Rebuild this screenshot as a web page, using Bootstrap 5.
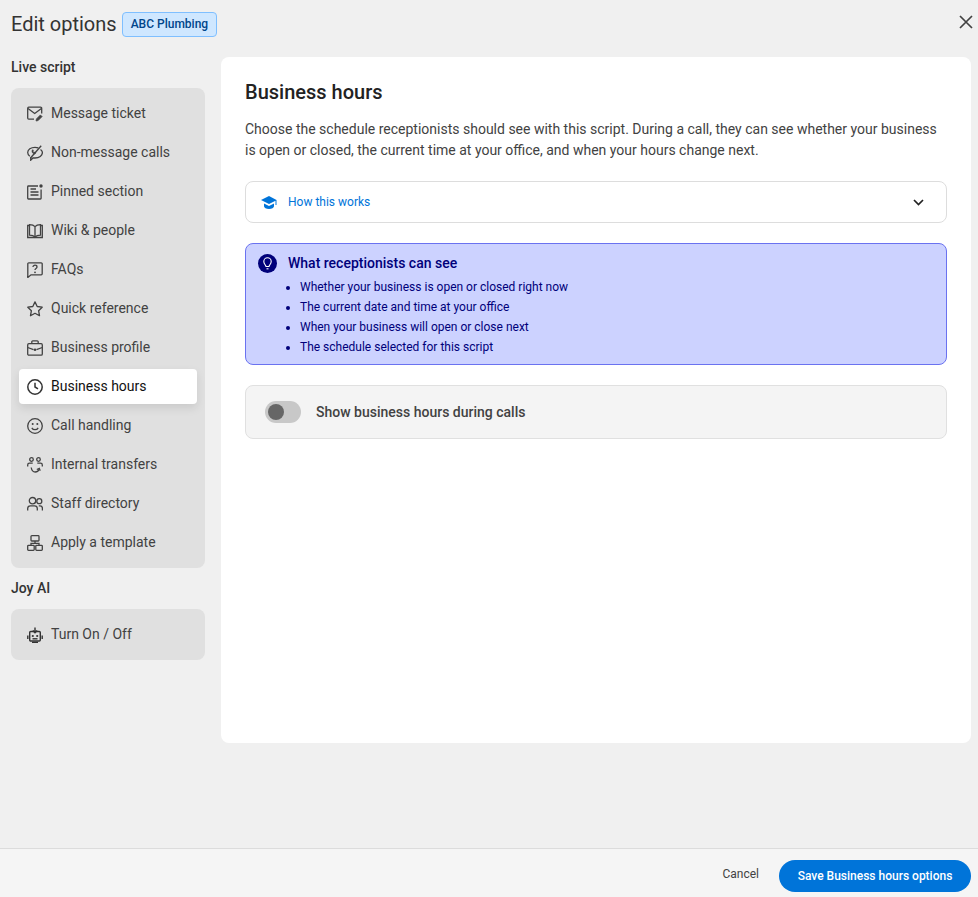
<!DOCTYPE html>
<html lang="en">
  <head>
    <meta charset="UTF-8" />
    <meta name="viewport" content="width=device-width, initial-scale=1.0" />
    <title>Edit options</title>
    <link
      href="https://cdn.jsdelivr.net/npm/bootstrap@5.3.0/dist/css/bootstrap.min.css"
      rel="stylesheet"
    />
    <style>
      html, body {
        height: 100%;
      }
      body {
        font-family: Roboto, "Liberation Sans", sans-serif;
        background-color: #f0f0f0;
        color: #333333;
        font-size: 14px;
      }
      .page-wrap {
        height: 897px;
      }
      .top-bar {
        height: 57px;
        padding: 12px 4px 0 11px;
      }
      .page-title {
        font-size: 20px;
        line-height: 25px;
        font-weight: 400;
        color: #333;
        margin: 0 5px 0 0;
      }
      .client-tag {
        height: 25px;
        line-height: 23px;
        padding: 0 8px;
        font-size: 12px;
        font-weight: 500;
        color: #00458a;
        background-color: #cfe7ff;
        border: 1px solid #7fbfff;
        border-radius: 4px;
      }
      .close-x {
        width: 16px;
        height: 16px;
        margin-top: 2px;
        padding: 0;
        border: 0;
        background: none;
        line-height: 0;
      }
      .main-area {
        padding: 0 7px 0 11px;
        gap: 16px;
      }
      .side-col {
        width: 194px;
      }
      .side-head {
        font-size: 14px;
        font-weight: 500;
        line-height: 20px;
        margin: 0;
      }
      .side-head-live {
        margin-bottom: 11px;
      }
      .side-head-joy {
        margin: 10px 0 11px;
      }
      .side-panel {
        background-color: #e0e0e0;
        border-radius: 8px;
        padding: 8px;
        gap: 4px;
      }
      .side-item {
        height: 35px;
        padding: 0 8px;
        gap: 8px;
        border-radius: 4px;
        color: #424242;
        font-size: 14px;
        text-decoration: none;
      }
      .side-item svg {
        flex: 0 0 16px;
      }
      .side-item.on {
        background-color: #fff;
        color: #111;
        box-shadow: 0 4px 10px rgba(0, 0, 0, 0.1);
      }
      .content-card {
        width: 750px;
        height: 686px;
        background-color: #fff;
        border-radius: 8px;
        padding: 24px;
      }
      .content-title {
        font-size: 20px;
        line-height: 23px;
        font-weight: 500;
        color: #222;
        margin-bottom: 15px;
      }
      .content-text {
        font-size: 14px;
        line-height: 21px;
        color: #424242;
        margin-bottom: 20px;
      }
      .how-box {
        height: 42px;
        border: 1px solid #dddddd;
        border-radius: 8px;
        padding: 0 22px 0 15px;
        margin-bottom: 20px;
        color: #0074d9;
        font-size: 12px;
        gap: 11px;
      }
      .see-box {
        height: 122px;
        background-color: #ccd2ff;
        border: 1px solid #6a72f0;
        border-radius: 8px;
        padding: 10px 12px;
        margin-bottom: 20px;
        color: #00007a;
        gap: 11px;
      }
      .see-title {
        font-size: 14px;
        line-height: 18px;
        font-weight: 500;
        margin: 0 0 5px;
      }
      .see-list {
        font-size: 12px;
        line-height: 20px;
        margin: 0;
        padding-left: 12px;
      }
      .bulb-dot {
        width: 19px;
        height: 19px;
        flex: 0 0 19px;
        border-radius: 50%;
        background-color: #00007a;
      }
      .toggle-box {
        height: 54px;
        background-color: #f4f4f4;
        border: 1px solid #e0e0e0;
        border-radius: 8px;
        padding: 0 19px;
        gap: 15px;
        font-size: 14px;
        font-weight: 500;
        color: #424242;
      }
      .toggle-track {
        width: 36px;
        height: 22px;
        border-radius: 11px;
        background-color: #c8c8c8;
        padding: 3px;
      }
      .toggle-knob {
        width: 16px;
        height: 16px;
        border-radius: 50%;
        background-color: #666;
      }
      .foot-bar {
        height: 49px;
        background-color: #f5f5f5;
        border-top: 1px solid #dcdcdc;
        padding: 6px 7px 0 0;
        gap: 20px;
      }
      .cancel-link {
        font-size: 12px;
        color: #424242;
        text-decoration: none;
        margin-top: -4px;
      }
      .save-btn {
        width: 192px;
        height: 32px;
        padding: 0;
        font-size: 12px;
        font-weight: 500;
        color: #fff;
        background-color: #0074d9;
        border: 0;
        border-radius: 16px;
      }
    </style>
  </head>

  <body>
    <div class="page-wrap d-flex flex-column">
      <!-- header -->
      <div class="top-bar d-flex justify-content-between align-items-start">
        <div class="d-flex align-items-center">
          <h1 class="page-title">Edit options</h1>
          <span class="client-tag">ABC Plumbing</span>
        </div>
        <button class="close-x" type="button" aria-label="Close">
          <svg width="14" height="14" viewBox="0 0 14 14" fill="none" stroke="#424242" stroke-width="1.7">
            <path d="M1 1l12 12M13 1L1 13" />
          </svg>
        </button>
      </div>

      <div class="main-area d-flex flex-grow-1">
        <!-- sidebar -->
        <div class="side-col">
          <p class="side-head side-head-live">Live script</p>
          <div class="side-panel d-flex flex-column">
            <a class="side-item d-flex align-items-center" href="#">
              <svg width="16" height="16" viewBox="0 0 16 16" fill="none" stroke="#424242" stroke-width="1.3">
                <path d="M7 13.2H1.8A1.200 1.200 0 0 1 .7 12V2.400A1.200 1.200 0 0 1 1.800 1.200h11.700a1.200 1.200 0 0 1 1.200 1.200V7.500" />
                <path d="M1 2.500L7.700 7.500l6.700-5" />
                <path d="M9 15l.4-2.100 4-4 1.700 1.700-4 4z" fill="#424242" stroke-width=".7" />
              </svg>
              Message ticket
            </a>
            <a class="side-item d-flex align-items-center" href="#">
              <svg width="16" height="16" viewBox="0 0 16 16" fill="none" stroke="#424242" stroke-width="1.3">
                <path d="M2.800 11.200C1.400 10.200.7 9 .7 7.600.7 4.600 3.900 2.300 8 2.300c1.200 0 2.300.2 3.300.6" />
                <path d="M13.500 4.400c1.200.9 1.900 2 1.900 3.200 0 3-3.200 5.400-7.400 5.400-.6 0-1.200-.1-1.800-.2L3.700 15.200v-3" />
                <path d="M3.500 13L14.200.8" />
                <path d="M5 5.500c-.5 1.800 1 3.500 3 3.600l.8-1.300-1.500-.8-.5.500-.7-.9.500-.6-.8-1.400z" fill="#424242" stroke-width=".5" />
              </svg>
              Non-message calls
            </a>
            <a class="side-item d-flex align-items-center" href="#">
              <svg width="16" height="16" viewBox="0 0 16 16" fill="none" stroke="#424242" stroke-width="1.3">
                <path d="M11 2H1.400A.7.7 0 0 0 .7 2.700v11.600a.7.7 0 0 0 .7.7h12a.7.7 0 0 0 .7-.7V5.500" />
                <path d="M3.500 5h5.500M3.500 8h8M3.500 11h8" />
                <circle cx="14" cy="2" r="1.700" fill="#424242" stroke="none" />
              </svg>
              Pinned section
            </a>
            <a class="side-item d-flex align-items-center" href="#">
              <svg width="16" height="16" viewBox="0 0 16 16" fill="none" stroke="#424242" stroke-width="1.3">
                <path d="M2.500 2.500H.7v12h14.600v-12h-1.800" />
                <path d="M8 3.700C7 2.500 5 1.700 2.500 1.700v10.500C5 12.200 7 13 8 14.200c1-1.200 3-2 5.500-2V1.700C11 1.700 9 2.500 8 3.700zM8 3.700v10.500" />
              </svg>
              Wiki &amp; people
            </a>
            <a class="side-item d-flex align-items-center" href="#">
              <svg width="16" height="16" viewBox="0 0 16 16" fill="none" stroke="#424242" stroke-width="1.3">
                <path d="M1.800 .8h12.400a1 1 0 0 1 1 1v10a1 1 0 0 1-1 1H4L.8 15.500V1.800a1 1 0 0 1 1-1z" />
                <path d="M6 4.900C6 3.800 6.900 3.200 8 3.200s2 .7 2 1.700c0 1.600-2 1.600-2 3.200" />
                <circle cx="8" cy="10.300" r=".9" fill="#424242" stroke="none" />
              </svg>
              FAQs
            </a>
            <a class="side-item d-flex align-items-center" href="#">
              <svg width="16" height="16" viewBox="0 0 16 16" fill="none" stroke="#424242" stroke-width="1.3">
                <path d="M8 .9l2.200 4.600 5 .7-3.600 3.500.9 5L8 12.300l-4.500 2.400.9-5L.8 6.200l5-.7z" stroke-linejoin="round" />
              </svg>
              Quick reference
            </a>
            <a class="side-item d-flex align-items-center" href="#">
              <svg width="16" height="16" viewBox="0 0 16 16" fill="none" stroke="#424242" stroke-width="1.3">
                <rect x=".7" y="3.700" width="14.600" height="11.500" rx="1.200" />
                <path d="M4.800 3.700V1.800A1 1 0 0 1 5.800 .8h4.400a1 1 0 0 1 1 1v1.900M.7 7.500l5.800 2.200M15.300 7.500L9.500 9.700" />
                <circle cx="8" cy="9.700" r="1.300" fill="#424242" stroke="none" />
              </svg>
              Business profile
            </a>
            <a class="side-item on d-flex align-items-center" href="#">
              <svg width="16" height="16" viewBox="0 0 16 16" fill="none" stroke="#333" stroke-width="1.5">
                <circle cx="8" cy="8" r="7.200" />
                <path d="M8 3.800V8l3 1.800" />
              </svg>
              Business hours
            </a>
            <a class="side-item d-flex align-items-center" href="#">
              <svg width="16" height="16" viewBox="0 0 16 16" fill="none" stroke="#424242" stroke-width="1.3">
                <circle cx="8" cy="8" r="7.300" />
                <path d="M4.800 9.800c.7 1.200 1.900 1.900 3.200 1.900s2.500-.7 3.200-1.900" />
                <circle cx="5.700" cy="6" r="1" fill="#424242" stroke="none" />
                <circle cx="10.300" cy="6" r="1" fill="#424242" stroke="none" />
              </svg>
              Call handling
            </a>
            <a class="side-item d-flex align-items-center" href="#">
              <svg width="16" height="16" viewBox="0 0 16 16" fill="none" stroke="#424242" stroke-width="1.3">
                <circle cx="4.500" cy="2.500" r="1.800" />
                <circle cx="11.500" cy="2.500" r="1.800" />
                <path d="M.7 9.500V8c0-1 .8-1.800 1.800-1.800h3.200M15.300 9.500V8c0-1-.8-1.800-1.800-1.800h-3.200" />
                <path d="M4.200 10.500c.5 2.900 2 4.500 4 4.500 1.800 0 3.200-1 3.900-2.800" />
                <path d="M9.800 12.500l2.500-1.200.9 2.400" />
              </svg>
              Internal transfers
            </a>
            <a class="side-item d-flex align-items-center" href="#">
              <svg width="16" height="16" viewBox="0 0 16 16" fill="none" stroke="#424242" stroke-width="1.3">
                <circle cx="5.500" cy="4.700" r="3.200" />
                <circle cx="12.300" cy="5.200" r="2.500" />
                <path d="M.7 14.500v-2c0-1.500 1.200-2.700 2.700-2.700h4.200c1.500 0 2.700 1.200 2.700 2.700v2M11.800 9.800h1.300c1.300 0 2.300 1.100 2.300 2.400v2.300" />
              </svg>
              Staff directory
            </a>
            <a class="side-item d-flex align-items-center" href="#">
              <svg width="16" height="16" viewBox="0 0 16 16" fill="none" stroke="#424242" stroke-width="1.3">
                <rect x="4" y=".7" width="8" height="5.300" rx=".8" />
                <rect x=".7" y="10.300" width="6.500" height="5" rx=".8" />
                <rect x="8.800" y="10.300" width="6.500" height="5" rx=".8" />
                <path d="M8 6v2.300M4 10.300V8.300h8v2" />
              </svg>
              Apply a template
            </a>
          </div>

          <p class="side-head side-head-joy">Joy AI</p>
          <div class="side-panel d-flex flex-column">
            <a class="side-item d-flex align-items-center" href="#">
              <svg width="16" height="16" viewBox="0 0 16 16" fill="none" stroke="#333" stroke-width="1.4">
                <rect x="2.700" y="4.500" width="10.600" height="9.500" rx="1" />
                <path d="M8 .5v5M5.800 3.500L8 5.700l2.200-2.200" />
                <path d="M.8 8.500v3.500M15.200 8.500v3.500" />
                <path d="M5 15.300h6" />
                <circle cx="5.800" cy="9" r="1.100" fill="#333" stroke="none" />
                <circle cx="10.200" cy="9" r="1.100" fill="#333" stroke="none" />
                <path d="M5.500 11.800h5" />
              </svg>
              Turn On / Off
            </a>
          </div>
        </div>

        <!-- content -->
        <div class="content-card">
          <h2 class="content-title">Business hours</h2>
          <p class="content-text">
            Choose the schedule receptionists should see with this script. During a call, they can see whether your business is open or closed, the current time at your office, and when your hours change next.
          </p>

          <div class="how-box d-flex align-items-center">
            <svg width="16" height="13" viewBox="0 0 16 13" fill="#0074d9">
              <path d="M8 0L0 4l8 4 6.500-3.200V9h1V4z" />
              <path d="M3 7.500v2.700C3 11.500 5.300 13 8 13s5-1.500 5-2.800V7.500L8 10z" />
            </svg>
            <span class="flex-grow-1">How this works</span>
            <svg width="11" height="7" viewBox="0 0 11 7" fill="none" stroke="#222" stroke-width="1.7">
              <path d="M1 1l4.500 4.500L10 1" />
            </svg>
          </div>

          <div class="see-box d-flex">
            <div class="bulb-dot d-flex align-items-center justify-content-center">
              <svg width="9" height="13" viewBox="0 0 9 13" fill="none" stroke="#fff" stroke-width="1.1">
                <path d="M3 9.500C2.800 8 .8 7 .8 4.500a3.700 3.700 0 0 1 7.400 0C8.200 7 6.200 8 6 9.500z" />
                <path d="M3.500 11.800h2" />
              </svg>
            </div>
            <div>
              <p class="see-title">What receptionists can see</p>
              <ul class="see-list">
                <li>Whether your business is open or closed right now</li>
                <li>The current date and time at your office</li>
                <li>When your business will open or close next</li>
                <li>The schedule selected for this script</li>
              </ul>
            </div>
          </div>

          <div class="toggle-box d-flex align-items-center">
            <div class="toggle-track"><div class="toggle-knob"></div></div>
            <span>Show business hours during calls</span>
          </div>
        </div>
      </div>

      <!-- footer -->
      <div class="foot-bar d-flex align-items-center justify-content-end">
        <a class="cancel-link" href="#">Cancel</a>
        <button class="save-btn" type="button">Save Business hours options</button>
      </div>
    </div>

    <script src="https://cdn.jsdelivr.net/npm/bootstrap@5.3.0/dist/js/bootstrap.bundle.min.js"></script>
  </body>
</html>
